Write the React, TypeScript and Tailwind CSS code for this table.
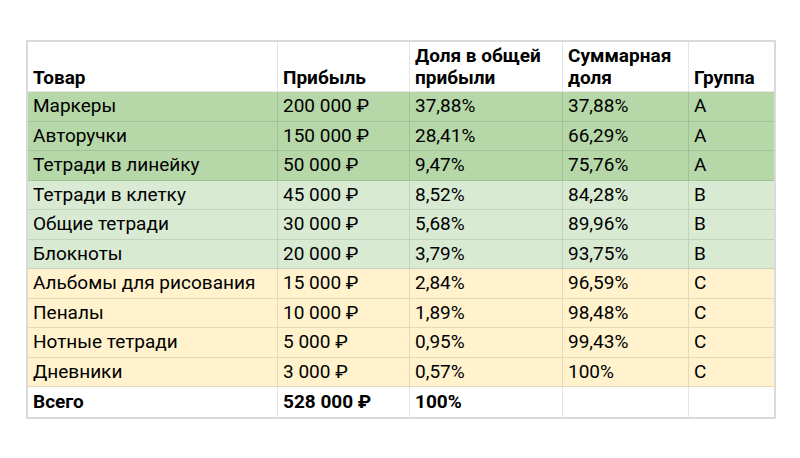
const rows = [
  { name: 'Маркеры', profit: '200 000 ₽', share: '37,88%', cum: '37,88%', group: 'A', bg: 'bg-[#b6d7a8]' },
  { name: 'Авторучки', profit: '150 000 ₽', share: '28,41%', cum: '66,29%', group: 'A', bg: 'bg-[#b6d7a8]' },
  { name: 'Тетради в линейку', profit: '50 000 ₽', share: '9,47%', cum: '75,76%', group: 'A', bg: 'bg-[#b6d7a8]' },
  { name: 'Тетради в клетку', profit: '45 000 ₽', share: '8,52%', cum: '84,28%', group: 'B', bg: 'bg-[#d9ead3]' },
  { name: 'Общие тетради', profit: '30 000 ₽', share: '5,68%', cum: '89,96%', group: 'B', bg: 'bg-[#d9ead3]' },
  { name: 'Блокноты', profit: '20 000 ₽', share: '3,79%', cum: '93,75%', group: 'B', bg: 'bg-[#d9ead3]' },
  { name: 'Альбомы для рисования', profit: '15 000 ₽', share: '2,84%', cum: '96,59%', group: 'C', bg: 'bg-[#fff2cc]' },
  { name: 'Пеналы', profit: '10 000 ₽', share: '1,89%', cum: '98,48%', group: 'C', bg: 'bg-[#fff2cc]' },
  { name: 'Нотные тетради', profit: '5 000 ₽', share: '0,95%', cum: '99,43%', group: 'C', bg: 'bg-[#fff2cc]' },
  { name: 'Дневники', profit: '3 000 ₽', share: '0,57%', cum: '100%', group: 'C', bg: 'bg-[#fff2cc]' },
];

const cols = 'grid grid-cols-[250px_132px_153px_126px_85px]';

const Cell = ({ children, last }: { children?: React.ReactNode; last?: boolean }) => (
  <div className={`flex items-center pl-[5px] h-[29.5px] border-b border-black/10 ${last ? '' : 'border-r'}`}>
    {children}
  </div>
);

const HeadCell = ({ children, last }: { children?: React.ReactNode; last?: boolean }) => (
  <div className={`flex items-end pl-[5px] pb-[3px] h-[50px] border-b border-black/10 leading-[21.5px] ${last ? '' : 'border-r'}`}>
    <div>{children}</div>
  </div>
);

export default function App() {
  return (
    <div className="w-[800px] h-[458px] bg-white pt-[40px] pl-[26px]" style={{ fontFamily: 'Roboto, "Noto Sans", sans-serif' }}>
      <div className="w-[750px] border-2 border-[#dadada] text-[19px] text-black">
        {/* Header */}
        <div className={`${cols} font-bold`}>
          <HeadCell>Товар</HeadCell>
          <HeadCell>Прибыль</HeadCell>
          <HeadCell>Доля в общей<br />прибыли</HeadCell>
          <HeadCell>Суммарная<br />доля</HeadCell>
          <HeadCell last>Группа</HeadCell>
        </div>

        {/* Rows */}
        {rows.map((r) => (
          <div key={r.name} className={`${cols} ${r.bg}`}>
            <Cell>{r.name}</Cell>
            <Cell>{r.profit}</Cell>
            <Cell>{r.share}</Cell>
            <Cell>{r.cum}</Cell>
            <Cell last>{r.group}</Cell>
          </div>
        ))}

        {/* Total */}
        <div className={`${cols} font-bold [&>div]:border-b-0`}>
          <Cell>Всего</Cell>
          <Cell>528 000 ₽</Cell>
          <Cell>100%</Cell>
          <Cell />
          <Cell last />
        </div>
      </div>
    </div>
  );
}
